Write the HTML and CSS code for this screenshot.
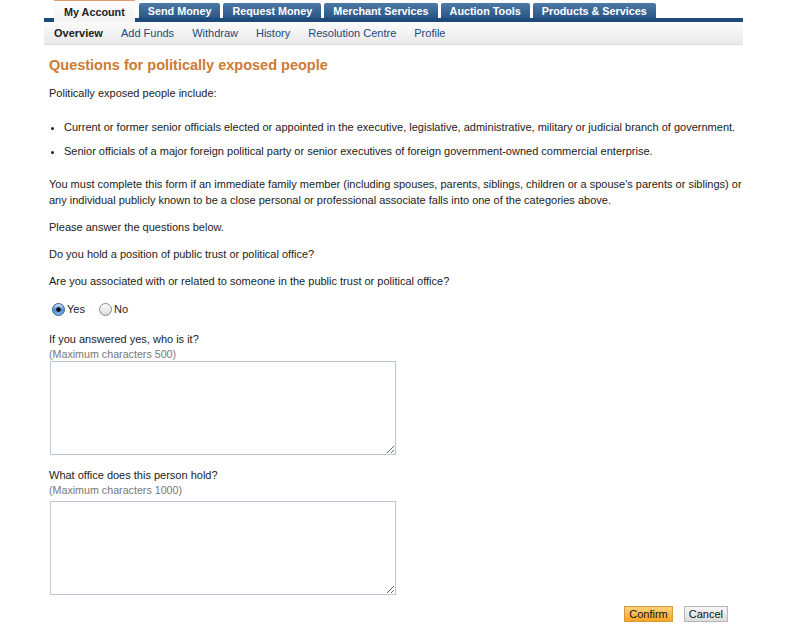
FILE: index.html
```html
<!DOCTYPE html>
<html>
<head>
<meta charset="utf-8">
<link rel="stylesheet" href="styles.css">
</head>
<body>
<div class="page">
  <div class="tabs">
    <span class="tab active">My Account</span>
    <span class="tab">Send Money</span>
    <span class="tab">Request Money</span>
    <span class="tab">Merchant Services</span>
    <span class="tab">Auction Tools</span>
    <span class="tab">Products &amp; Services</span>
  </div>
  <div class="subnav">
    <span class="sub current">Overview</span>
    <span class="sub">Add Funds</span>
    <span class="sub">Withdraw</span>
    <span class="sub">History</span>
    <span class="sub">Resolution Centre</span>
    <span class="sub">Profile</span>
  </div>
  <div class="content">
    <h1 class="title">Questions for politically exposed people</h1>
    <p class="para">Politically exposed people include:</p>
    <ul class="bullets">
      <li>Current or former senior officials elected or appointed in the executive, legislative, administrative, military or judicial branch of government.</li>
      <li>Senior officials of a major foreign political party or senior executives of foreign government-owned commercial enterprise.</li>
    </ul>
    <p class="para long">You must complete this form if an immediate family member (including spouses, parents, siblings, children or a spouse's parents or siblings) or any individual publicly known to be a close personal or professional associate falls into one of the categories above.</p>
    <p class="para">Please answer the questions below.</p>
    <p class="para">Do you hold a position of public trust or political office?</p>
    <p class="para">Are you associated with or related to someone in the public trust or political office?</p>
    <div class="radios">
      <label class="radio"><input type="radio" name="assoc" checked><span>Yes</span></label>
      <label class="radio"><input type="radio" name="assoc"><span>No</span></label>
    </div>
    <div class="field first">
      <div class="label">If you answered yes, who is it?</div>
      <div class="hint">(Maximum characters 500)</div>
      <textarea class="box tight"></textarea>
    </div>
    <div class="field">
      <div class="label">What office does this person hold?</div>
      <div class="hint">(Maximum characters 1000)</div>
      <textarea class="box"></textarea>
    </div>
    <div class="actions">
      <button class="btn primary">Confirm</button>
      <button class="btn">Cancel</button>
    </div>
  </div>
</div>
</body>
</html>
```
FILE: styles.css
```css
html, body {
  margin: 0;
  padding: 0;
  background: #fff;
}
body {
  font-family: "Liberation Sans", Arial, sans-serif;
  font-size: 11px;
  color: #222;
}
.page {
  margin-left: 44px;
  width: 699px;
}
.tabs {
  display: flex;
  align-items: flex-end;
  gap: 3px;
  padding-left: 10px;
  height: 18px;
  border-bottom: 4px solid #1e4a7a;
}
.tab {
  display: block;
  height: 15px;
  line-height: 16px;
  padding: 0 9px;
  font-weight: bold;
  font-size: 10.8px;
  color: #fff;
  background: linear-gradient(#4d79a6, #2a5688);
  border-top-left-radius: 2px;
  border-top-right-radius: 2px;
}
.tab.active {
  height: 21px;
  line-height: 23px;
  margin-bottom: -4px;
  margin-right: 1px;
  color: #222;
  background: linear-gradient(#fdfdfd, #f3f3f3);
  border-top: 1px solid #e59a6a;
  border-radius: 0;
  padding: 0 10px;
}
.subnav {
  display: flex;
  align-items: center;
  height: 22px;
  background: linear-gradient(#fcfcfc, #e9e9e9);
  border-bottom: 1px solid #d7e3ee;
}
.sub {
  padding: 0 9px;
  font-size: 11px;
  color: #23487c;
}
.sub.current {
  font-weight: bold;
  color: #222;
  padding-left: 10px;
}
.content {
  padding: 0 0 0 5px;
}
.title {
  margin: 11px 0 0;
  font-size: 14.5px;
  line-height: 18px;
  font-weight: bold;
  color: #cd7b33;
}
.para {
  margin: 11px 0 0;
  line-height: 16px;
}
.long {
  margin-top: 17px;
}
.bullets {
  margin: 18px 0 0;
  padding-left: 15px;
}
.bullets li {
  line-height: 16px;
  margin-bottom: 8px;
}
.radios {
  display: flex;
  gap: 11px;
  margin-top: 12px;
  height: 16px;
}
.radio {
  display: flex;
  align-items: center;
  gap: 2px;
}
.radio input {
  -webkit-appearance: none;
  appearance: none;
  width: 13px;
  height: 13px;
  margin: 0 0 0 3px;
  border-radius: 50%;
  border: 1px solid #8a8a8a;
  background: linear-gradient(#fdfdfd, #dcdcdc);
}
.radio input:checked {
  border-color: #2e5f94;
  background: radial-gradient(circle at 50% 50%, #111 0, #111 2px, transparent 2.5px), linear-gradient(#cfe2f6, #4d8ed6 55%, #86b8ea);
}
.field {
  margin-top: 13px;
}
.field.first {
  margin-top: 15px;
}
.label {
  line-height: 15px;
}
.hint {
  color: #777;
  font-size: 10.7px;
  line-height: 14px;
}
.box {
  display: block;
  width: 346px;
  height: 94px;
  margin: 4px 0 0 1px;
  box-sizing: border-box;
  border: 1px solid #b9c7d6;
  resize: vertical;
}
.box.tight {
  margin-top: 0;
}
.actions {
  display: flex;
  justify-content: flex-end;
  gap: 11px;
  margin-top: 11px;
  padding-right: 15px;
}
.btn {
  font-family: "Liberation Sans", Arial, sans-serif;
  font-size: 11px;
  color: #111;
  height: 16px;
  padding: 0 4px;
  border: 1px solid #b5b5b5;
  background: linear-gradient(#f6f6f6, #dcdcdc);
}
.btn.primary {
  border-color: #d89a3c;
  background: linear-gradient(#ffd27c, #f9a41f);
}
```
